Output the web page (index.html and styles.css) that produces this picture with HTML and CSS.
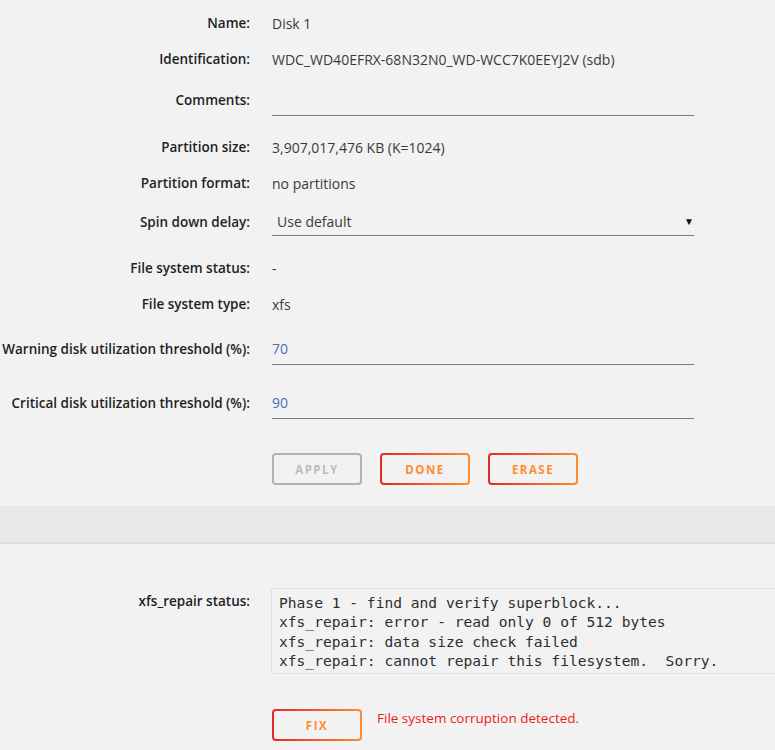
FILE: index.html
```html
<!DOCTYPE html>
<html lang="en">
<head>
    <meta charset="UTF-8">
    <meta name="viewport" content="width=device-width, initial-scale=1.0">
    <title>Disk 1 Settings</title>
    <link rel="stylesheet" href="styles.css">
</head>
<body>

    <form class="settings">
        <div class="row">
            <div class="label">Name:</div>
            <div class="value">Disk 1</div>
        </div>
        <div class="row">
            <div class="label">Identification:</div>
            <div class="value">WDC_WD40EFRX-68N32N0_WD-WCC7K0EEYJ2V (sdb)</div>
        </div>
        <div class="row field">
            <label class="label" for="comments">Comments:</label>
            <input id="comments" class="text-input" type="text" value="">
        </div>
        <div class="row">
            <div class="label">Partition size:</div>
            <div class="value">3,907,017,476 KB (K=1024)</div>
        </div>
        <div class="row">
            <div class="label">Partition format:</div>
            <div class="value">no partitions</div>
        </div>
        <div class="row field select-row">
            <label class="label" for="spindown">Spin down delay:</label>
            <div class="select-wrap">
                <select id="spindown" class="select-input">
                    <option selected>Use default</option>
                    <option>Never</option>
                    <option>15 minutes</option>
                    <option>30 minutes</option>
                    <option>1 hour</option>
                </select>
                <span class="caret">&#9660;</span>
            </div>
        </div>
        <div class="row">
            <div class="label">File system status:</div>
            <div class="value">-</div>
        </div>
        <div class="row">
            <div class="label">File system type:</div>
            <div class="value">xfs</div>
        </div>
        <div class="row field warn-row">
            <label class="label" for="warning">Warning disk utilization threshold (%):</label>
            <input id="warning" class="text-input num" type="text" value="70">
        </div>
        <div class="row field crit-row">
            <label class="label" for="critical">Critical disk utilization threshold (%):</label>
            <input id="critical" class="text-input num" type="text" value="90">
        </div>
        <div class="row buttons">
            <div></div>
            <div class="btn-group">
                <button type="button" class="btn" disabled>Apply</button>
                <button type="button" class="btn">Done</button>
                <button type="button" class="btn">Erase</button>
            </div>
        </div>
    </form>

    <div class="section-bar"></div>

    <div class="repair">
        <div class="row top">
            <div class="label">xfs_repair status:</div>
            <pre class="log">Phase 1 - find and verify superblock...
xfs_repair: error - read only 0 of 512 bytes
xfs_repair: data size check failed
xfs_repair: cannot repair this filesystem.  Sorry.</pre>
        </div>
        <div class="row fix-row">
            <div></div>
            <div class="fix">
                <button type="button" class="btn">Fix</button>
                <span class="error-msg">File system corruption detected.</span>
            </div>
        </div>
    </div>

</body>
</html>
```

FILE: styles.css
```css
html {
    overflow-x: hidden;
}
body {
    margin: 0;
    padding: 5px 0 0;
    background-color: #f2f2f2;
    color: #3a3a3a;
    font-family: "Open Sans", "Noto Sans", sans-serif;
    font-size: 14px;
}
.row {
    display: grid;
    box-sizing: border-box;
    grid-template-columns: 250px 1fr;
    column-gap: 22px;
    align-items: center;
    min-height: 36px;
}
.label {
    text-align: right;
    font-size: 13.5px;
    font-weight: 600;
    color: #1f1f1f;
    white-space: nowrap;
}
.value {
    color: #3a3a3a;
}
.row.field {
    padding: 7px 0 13px;
}
.row.select-row {
    padding: 7px 0 14px;
}
.row.warn-row {
    margin-top: 4px;
}
.row.crit-row {
    margin-top: 2px;
}
.text-input, .select-input {
    display: block;
    box-sizing: border-box;
    width: 422px;
    height: 32px;
    padding: 0 5px 0 0;
    border: none;
    border-bottom: 1px solid #7a7a7a;
    background: transparent;
    font-family: inherit;
    font-size: 14px;
    color: #3a3a3a;
    outline: none;
}
.text-input.num {
    color: #486dba;
}
.select-wrap {
    position: relative;
    width: 422px;
}
.select-input {
    height: 28px;
    padding-left: 5px;
    appearance: none;
    -webkit-appearance: none;
}
.caret {
    position: absolute;
    right: 0;
    top: 6px;
    font-size: 10px;
    color: #111;
    pointer-events: none;
}
.row.buttons {
    margin-top: 21px;
    min-height: 0;
    align-items: start;
}
.btn-group, .fix {
    display: flex;
    gap: 18px;
    align-items: flex-start;
}
.btn {
    box-sizing: border-box;
    width: 90px;
    height: 32px;
    border: 2px solid transparent;
    border-radius: 4px;
    background:
        linear-gradient(#f2f2f2, #f2f2f2) padding-box,
        linear-gradient(90deg, #e22828, #ff8c2f) border-box;
    color: #ff8c2f;
    font-family: inherit;
    font-size: 11.5px;
    font-weight: bold;
    letter-spacing: 1.5px;
    text-transform: uppercase;
    cursor: pointer;
}
.btn:disabled {
    background:
        linear-gradient(#f2f2f2, #f2f2f2) padding-box,
        linear-gradient(90deg, #b3b3b3, #b3b3b3) border-box;
    color: #bcbcbc;
    cursor: default;
}
.section-bar {
    margin-top: 21px;
    height: 36px;
    background-color: #e8e8e8;
    border-bottom: 2px solid #dcdcdc;
}
.repair {
    padding-top: 44px;
}
.row.top {
    align-items: start;
}
.row.top .label {
    line-height: 19px;
    padding-top: 4px;
}
.log {
    margin: 0 0 0 -1px;
    padding: 4px 7px 3px;
    border: 1px solid #e0e0e0;
    border-right: none;
    border-radius: 2px 0 0 2px;
    background-color: #f2f2f2;
    color: #2e2e2e;
    font-family: "DejaVu Sans Mono", monospace;
    font-size: 14.6px;
    line-height: 19.3px;
    white-space: pre;
}
.row.fix-row {
    margin-top: 35px;
    min-height: 0;
    align-items: start;
}
.fix {
    gap: 15px;
}
.error-msg {
    color: #ef1a1a;
    font-size: 13.5px;
    line-height: 18px;
}
```
